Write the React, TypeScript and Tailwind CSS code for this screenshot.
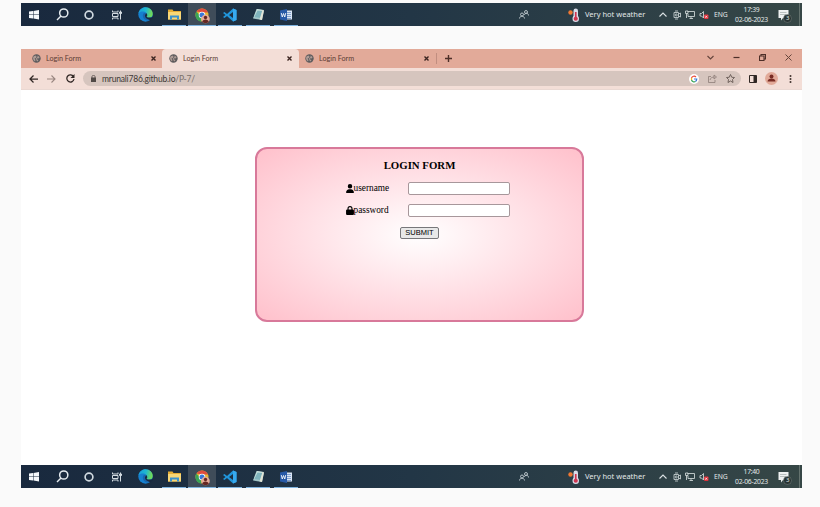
import type { ReactNode } from "react";

function Globe() {
  return (
    <svg className="h-[9px] w-[9px] shrink-0" viewBox="0 0 18 18">
      <circle cx="9" cy="9" r="8.4" fill="#5d5b5d" />
      <path d="M3 5l4-2 2 2-1 3-3 1 2 3-1 3-3-3-1-4zM11 3l4 3-1 3-3-1-1 3 3 1-2 3-2-2-1-4 3-3z" fill="#b09c96" />
    </svg>
  );
}

function Cross({ className }: { className: string }) {
  return (
    <svg className={className} viewBox="0 0 10 10">
      <path d="M1 1l8 8M9 1L1 9" stroke="#3b2420" strokeWidth="2.8" fill="none" />
    </svg>
  );
}

function Cell({ children, active, line }: { children: ReactNode; active?: boolean; line?: boolean }) {
  return (
    <div className={`relative flex h-full w-7 items-center justify-center ${active ? "bg-[#3f4c59]" : ""}`}>
      {children}
      {line && <span className={`absolute bottom-0 h-px bg-[#7fb4e0] ${active ? "inset-x-0" : "inset-x-[2px]"}`} />}
    </div>
  );
}

function Taskbar({ time }: { time: string }) {
  return (
    <div className="flex h-[23px] w-[781px] items-center bg-linear-to-r from-[#19293e] via-[#223646] to-[#364746] font-['Noto_Sans',sans-serif] text-[#e2e8e8]">
      <div className="-ml-px flex h-full">
        <Cell>
          <svg className="h-[10px] w-[10px]" viewBox="0 0 20 20" fill="#f4f7fa">
            <path d="M0 3l8-1v7H0zM9 2l11-2v9H9zM0 10h8v7l-8-1zM9 10h11v9L9 17z" />
          </svg>
        </Cell>
        <Cell>
          <svg className="h-[13px] w-[13px]" viewBox="0 0 26 26" fill="none" stroke="#e5ebef" strokeWidth="3">
            <circle cx="15.5" cy="10" r="8.2" />
            <path d="M10 16L2 24" />
          </svg>
        </Cell>
        <Cell>
          <svg className="mr-[2px] h-[10px] w-[10px]" viewBox="0 0 18 18">
            <circle cx="9" cy="9" r="7" fill="none" stroke="#d1dae0" strokeWidth="3" />
          </svg>
        </Cell>
        <Cell>
          <svg className="mr-[3px] h-[10px] w-[10px]" viewBox="0 0 20 20" fill="none" stroke="#d4dce2" strokeWidth="2">
            <path d="M1 1v3h11V1M1 19v-3h11v3M1 7h11v6H1zM17 1v18" />
            <path d="M15 4h4v3h-4z" fill="#ccd5dc" />
          </svg>
        </Cell>
        <Cell>
          <svg className="mr-px h-[15px] w-[15px]" viewBox="0 0 28 28">
            <defs>
              <linearGradient id="edge" x1="0" y1="0" x2="1" y2="0.2">
                <stop stopColor="#159bdb" />
                <stop offset="0.55" stopColor="#20b7d0" />
                <stop offset="1" stopColor="#70db59" />
              </linearGradient>
            </defs>
            <circle cx="14" cy="14" r="13.5" fill="#1680cf" />
            <path d="M1 12C2 5 8 .5 14 .5 22 .5 27.5 6 27.5 13c0 5-4 7-8 7-3 0-5-1-4-3 2-3 1-7-3-8-5-1-9 0-11.5 3z" fill="url(#edge)" />
            <path d="M11 11c-4 4-2 12 6 14 4 1 7-1 9-4-7 3-14-2-11-6 1-2 0-4-4-4z" fill="#1865ae" />
            <path d="M15 11c3 2 3 5 1 7 2 2 6 2 10 1l2 1-4 5c-6-2-11-4-11-9z" fill="#19293e" />
          </svg>
        </Cell>
        <Cell line>
          <svg className="h-[11px] w-[13px]" viewBox="0 0 26 22">
            <path d="M0 1h9l2 3h15v17H0z" fill="#e6ad35" />
            <path d="M0 6h26v15H0z" fill="#f8d777" />
            <path d="M4 13h18v8h-4v-4H8v4H4z" fill="#3a92cf" />
          </svg>
        </Cell>
        <Cell active line>
          <svg className="mt-[2px] h-[16px] w-[15px]" viewBox="0 0 30 32">
            <circle cx="14" cy="14" r="13" fill="#e9b936" />
            <path d="M3 7a13 13 0 0 1 23 2H14z" fill="#df4c3d" />
            <path d="M3 7l8 10 2 10A13 13 0 0 1 3 7z" fill="#39a456" />
            <circle cx="14" cy="14" r="6.5" fill="#fff" />
            <circle cx="14" cy="14" r="5" fill="#3978d8" />
            <circle cx="21" cy="22" r="8.5" fill="#e4aa99" />
            <circle cx="21" cy="19" r="3.4" fill="#642823" />
            <path d="M14.5 28c0-7 13-7 13 0-3 3-10 3-13 0z" fill="#642823" />
          </svg>
        </Cell>
        <Cell line>
          <svg className="h-[14px] w-[14px]" viewBox="0 0 28 28">
            <path d="M20 1l7 3v20l-7 3L8 16l-5 4-3-2 5-4-5-4 3-2 5 4zM20 8l-8 6 8 6z" fill="#2196dc" fillRule="evenodd" />
            <path d="M20 1l7 3v20l-7 3z" fill="#37aaf0" />
          </svg>
        </Cell>
        <Cell line>
          <svg className="h-[13px] w-[13px]" viewBox="0 0 26 26">
            <path d="M9 2l15 2-4 20L2 21z" fill="#92b9bd" />
            <path d="M10 2l12 2-5 17-14-1z" fill="#cce1dc" />
            <path d="M11 5l10 1-4 14-13-1z" fill="#7fb4bd" />
            <path d="M21 4l3 1-4 19-5-1z" fill="#e4e5d6" />
          </svg>
        </Cell>
        <Cell line>
          <svg className="h-[12px] w-[12px]" viewBox="0 0 24 24">
            <path d="M12 3h12v18H12z" fill="#dae5f4" />
            <path d="M14 7h8M14 11h8M14 15h8M14 19h8" stroke="#678ac2" strokeWidth="1.5" />
            <path d="M0 3l14-3v24L0 21z" fill="#2759a6" />
            <path d="M2.5 8l2 8 2.5-7 2.5 7 2-8" fill="none" stroke="#fff" strokeWidth="1.7" />
          </svg>
        </Cell>
      </div>
      <svg className="ml-[219px] h-[9px] w-[10px]" viewBox="0 0 20 18" fill="none" stroke="#c1cbd0" strokeWidth="1.8">
        <circle cx="6" cy="9" r="3" />
        <path d="M1 17c0-6 10-6 10 0M11 10c0-5 8-5 8 1" />
        <circle cx="14" cy="4" r="3" />
      </svg>
      <svg className="ml-[39px] h-[14px] w-[12px]" viewBox="0 0 24 28">
        <circle cx="5" cy="9" r="4.4" fill="#f17832" />
        <rect x="11" y="1" width="9" height="20" rx="4.5" fill="#d8dce7" />
        <circle cx="15.5" cy="21.5" r="6.5" fill="#d8dce7" />
        <path d="M15.5 8v13" stroke="#cf3550" strokeWidth="3.4" />
        <circle cx="15.5" cy="21.5" r="4.2" fill="#cf3550" />
      </svg>
      <span className="ml-[5px] w-[62px] whitespace-nowrap text-[7.5px] leading-none">Very hot weather</span>
      <svg className="ml-[12px] h-[5px] w-[8px] shrink-0" viewBox="0 0 16 10" fill="none" stroke="#dbe1e3" strokeWidth="2.2"><path d="M1 9l7-7 7 7" /></svg>
      <svg className="ml-[6px] h-[10px] w-[8px] shrink-0" viewBox="0 0 16 20" fill="none" stroke="#c9d1d2" strokeWidth="1.7"><path d="M2 5h9v10H2zM11 8l4-2v8l-4-2M4 2h6M4 18h6" /><circle cx="6.5" cy="10" r="2" /></svg>
      <svg className="ml-[4px] h-[9px] w-[10px] shrink-0" viewBox="0 0 20 18" fill="none" stroke="#d2dada" strokeWidth="1.7"><path d="M5 3h14v10H6V8M9 17h7M12 13v4M1 2h5v5H1zM3 7v9" /></svg>
      <svg className="ml-[4px] h-[10px] w-[10px] shrink-0" viewBox="0 0 20 20"><path d="M2 7h3l4-4v13l-4-4H2z" fill="none" stroke="#d2dada" strokeWidth="1.7" /><rect x="10" y="9" width="9" height="9" rx="2" fill="#e2333d" /><path d="M12.5 11.5l4 4m0-4l-4 4" stroke="#fff" strokeWidth="1.4" /></svg>
      <span className="ml-[5px] mt-px w-[14px] whitespace-nowrap text-[6.8px] leading-none tracking-[-0.1px]">ENG</span>
      <div className="ml-[6px] flex w-[35px] flex-col items-center whitespace-nowrap text-[6.8px] leading-[10px]">
        <span className="tracking-[-0.3px]">{time}</span>
        <span className="tracking-[-0.25px]">02-06-2023</span>
      </div>
      <div className="relative ml-[9px] mt-[2px] h-[14px] w-[14px]">
        <svg className="h-[14px] w-[14px]" viewBox="0 0 28 28"><path d="M1 2h20v16H10l-4 5v-5H1z" fill="#eff2f2" /><path d="M4 7h13M4 11h12" stroke="#84908e" strokeWidth="1" /><circle cx="19" cy="19" r="8" fill="#273333" stroke="#7c8683" /></svg>
        <span className="absolute left-[8px] top-[6px] text-[6px] leading-[7px]">3</span>
      </div>
      <span className="ml-auto mr-[2px] h-full w-px bg-[#65736f]" />
    </div>
  );
}

function TabText() {
  return <span className="ml-[5px] whitespace-nowrap text-[7.2px] leading-none text-[#5c3d35]">Login Form</span>;
}

function Browser() {
  return (
    <div className="h-[416px] w-[781px] bg-white font-['Lato',sans-serif]">
      <div className="flex h-[19px] items-center bg-[#e2aa99]">
        <div className="flex h-full w-[141px] items-center pl-[11px]"><Globe /><TabText /><Cross className="ml-auto mr-[6px] h-[5px] w-[5px]" /></div>
        <div className="flex h-full w-[137px] items-center rounded-t-[4px] bg-[#f3ded7] pl-[7px]"><Globe /><TabText /><Cross className="ml-auto mr-[7px] h-[5px] w-[5px]" /></div>
        <div className="flex h-full w-[137px] items-center pl-[6px]"><Globe /><TabText /><Cross className="ml-auto mr-[7px] h-[5px] w-[5px]" /></div>
        <span className="h-[11px] w-px bg-[#c18e80]" />
        <svg className="ml-[8px] h-[7px] w-[7px]" viewBox="0 0 14 14"><path d="M7 0v14M0 7h14" stroke="#4d2f28" strokeWidth="2.8" /></svg>
        <div className="-mt-[2px] ml-auto flex items-center pr-[10px]">
          <svg className="mr-[19px] h-[5px] w-[7px]" viewBox="0 0 14 10" fill="none" stroke="#65443b" strokeWidth="2.2"><path d="M1 2l6 6 6-6" /></svg>
          <svg className="mr-[19px] h-[7px] w-[7px]" viewBox="0 0 14 14"><path d="M1 7h12" stroke="#4d2f28" strokeWidth="2.4" /></svg>
          <svg className="mr-[19px] h-[7px] w-[7px]" viewBox="0 0 14 14" fill="none" stroke="#4d2f28" strokeWidth="2.2"><path d="M1 4h9v9H1zM4 3V1h9v9h-2" /></svg>
          <svg className="h-[7px] w-[7px]" viewBox="0 0 14 14" stroke="#65443b" strokeWidth="2"><path d="M1 1l12 12M13 1L1 13" /></svg>
        </div>
      </div>
      <div className="flex h-[22px] items-center border-b border-[#ead8d2] bg-[#f3ded7] pl-[8px]">
        <svg className="h-[8px] w-[9px]" viewBox="0 0 18 16" fill="none" stroke="#302724" strokeWidth="2.5"><path d="M18 8H2M9 1L2 8l7 7" /></svg>
        <svg className="ml-[9px] h-[8px] w-[9px]" viewBox="0 0 18 16" fill="none" stroke="#998680" strokeWidth="2.2"><path d="M0 8h16M9 1l7 7-7 7" /></svg>
        <svg className="ml-[10px] h-[9px] w-[9px]" viewBox="0 0 18 18"><path d="M15 5a7.2 7.2 0 1 0 1 5" fill="none" stroke="#302724" strokeWidth="2.5" /><path d="M17 0v8H9z" fill="#302724" /></svg>
        <div className="ml-[8px] flex h-[15px] w-[658px] items-center rounded-full bg-[#d6c5be] pl-[8px]">
          <svg className="h-[7px] w-[5px]" viewBox="0 0 10 14"><path d="M0 5h10v9H0z" fill="#514946" /><path d="M2 6V3c0-3 6-3 6 0v3" fill="none" stroke="#514946" strokeWidth="1.6" /></svg>
          <span className="ml-[6px] mt-px whitespace-nowrap text-[8.5px] leading-none tracking-[-0.2px] text-[#403835]">mrunali786.github.io<span className="text-[#79706b]">/P-7/</span></span>
          <div className="ml-auto flex items-center pr-[6px]">
            <svg className="mr-[9px] h-[10px] w-[10px]" viewBox="0 0 20 20"><circle cx="10" cy="10" r="10" fill="#fff" /><g fill="none" strokeWidth="2.4"><path d="M14 6a5.5 5.5 0 0 0-9 2" stroke="#e9483a" /><path d="M5 8v4" stroke="#edb71f" /><path d="M5 12a5.5 5.5 0 0 0 8 3" stroke="#39a456" /><path d="M10 10h5.5q0 3-2.5 5" stroke="#3978d8" /></g></svg>
            <svg className="mr-[9px] h-[9px] w-[9px]" viewBox="0 0 18 18" fill="none" stroke="#897a74" strokeWidth="1.5"><path d="M6 5H1v12h13v-5M4 12c1-5 5-6 9-6M12 2l5 4-5 4z" /></svg>
            <svg className="h-[9px] w-[9px]" viewBox="0 0 18 18" fill="none" stroke="#655852" strokeWidth="1.8"><path d="M9 1l2.5 5.5 5.5.5-4 4 1 6-5-3-5 3 1-6-4-4 5.5-.5z" /></svg>
          </div>
        </div>
        <svg className="ml-[8px] h-[8px] w-[8px]" viewBox="0 0 16 16"><path d="M1 1h14v14H1z" fill="none" stroke="#302724" strokeWidth="2" /><path d="M9 1h6v14H9z" fill="#302724" /></svg>
        <svg className="ml-[8px] h-[13px] w-[13px]" viewBox="0 0 26 26"><circle cx="13" cy="13" r="13" fill="#e2aa99" /><circle cx="13" cy="9" r="4" fill="#782b23" /><path d="M5 19c0-8 16-8 16 0z" fill="#782b23" /></svg>
        <svg className="ml-[11px] h-[8px] w-[3px]" viewBox="0 0 6 16" fill="#40322e"><circle cx="3" cy="2" r="2" /><circle cx="3" cy="8" r="2" /><circle cx="3" cy="14" r="2" /></svg>
      </div>
      <main className="pl-[234px] pt-[57px]">
        <form className="flex h-[175px] w-[329px] flex-col items-center rounded-[12px] border-2 border-[#d8799a] bg-[radial-gradient(ellipse_farthest-corner,white,pink)] pt-[8px] font-['Liberation_Serif',serif] text-black">
          <h1 className="text-[10.8px] font-bold leading-[16px]">LOGIN FORM</h1>
          <div className="ml-[16px] mt-[9px] flex h-[13px] w-[164px] items-center">
            <svg className="h-[9px] w-[8px]" viewBox="0 0 448 512"><path d="M224 256A128 128 0 1 0 224 0a128 128 0 1 0 0 256m-46 48C80 304 0 384 0 482c0 16 14 30 30 30h388c16 0 30-14 30-30 0-98-80-178-178-178z" /></svg>
            <label className="text-[9.3px] leading-none">username</label>
            <input aria-label="username" className="ml-auto h-[13px] w-[102px] rounded-[2px] border border-[#a7979b] bg-white" />
          </div>
          <div className="ml-[16px] mt-[9px] flex h-[13px] w-[164px] items-center">
            <svg className="h-[9px] w-[8px]" viewBox="0 0 448 512"><path d="M144 144v48h160v-48a80 80 0 0 0-160 0m-64 48v-48a144 144 0 0 1 288 0v48h16a64 64 0 0 1 64 64v192a64 64 0 0 1-64 64H64a64 64 0 0 1-64-64V256a64 64 0 0 1 64-64z" /></svg>
            <label className="text-[9.3px] leading-none">password</label>
            <input aria-label="password" className="ml-auto h-[13px] w-[102px] rounded-[2px] border border-[#a7979b] bg-white" />
          </div>
          <button type="button" className="mt-[10px] h-[12px] w-[39px] rounded-[2px] border border-[#77777a] bg-[#e8e8e8] font-['Liberation_Sans',sans-serif] text-[7.5px] leading-[10px]">SUBMIT</button>
        </form>
      </main>
    </div>
  );
}

export default function App() {
  return (
    <div className="flex h-[507px] w-[820px] flex-col overflow-hidden bg-[#fafafa] pl-[21px] pt-[3px]">
      <Taskbar time="17:39" />
      <div className="mt-[23px]"><Browser /></div>
      <Taskbar time="17:40" />
    </div>
  );
}
